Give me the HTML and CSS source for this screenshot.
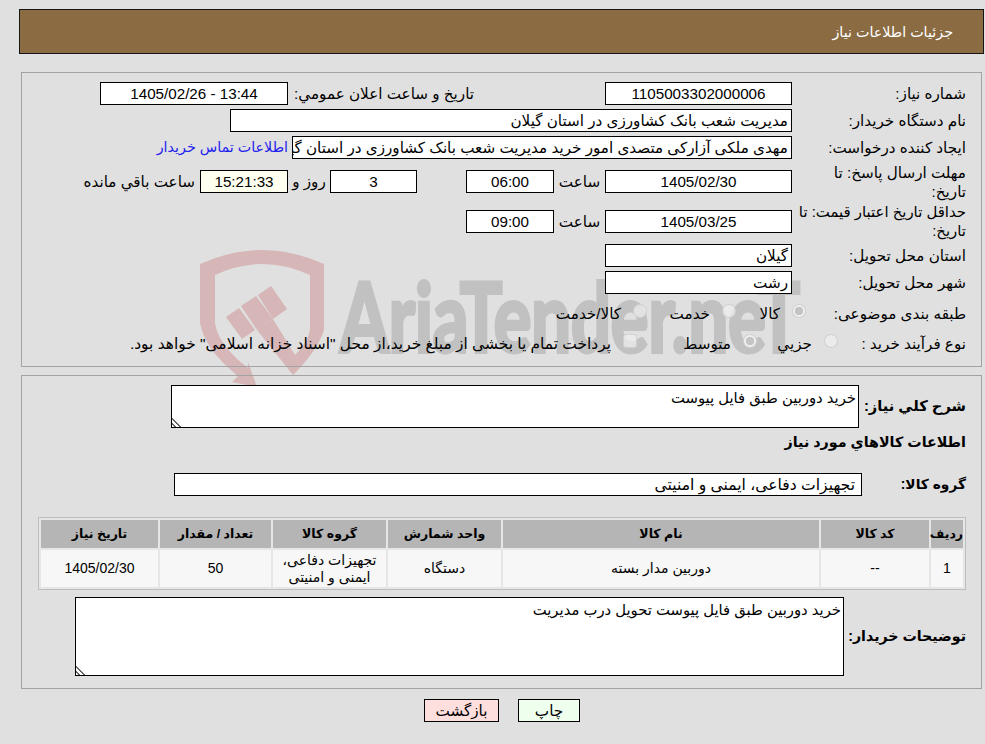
FILE: index.html
```html
<!DOCTYPE html>
<html lang="fa" dir="rtl">
<head>
<meta charset="utf-8">
<title>جزئیات اطلاعات نیاز</title>
<link rel="stylesheet" href="styles.css">
</head>
<body>
<svg class="watermark" viewBox="190 240 640 150" aria-hidden="true">
  <path class="wm-shield" d="M200 264Q262 236 324 264L324 330Q318 350 293 375L257 330L273 319L295 355Q310 340 310 327L310 275Q262 253 215 275L215 323Q218 345 248 368L248 362L257 387L232 382L238 376Q205 350 200 323Z"/>
  <path class="wm-shield" d="M226 317L239 308L255 330L242 339Z"/>
  <path class="wm-shield" d="M241 306L256 296L273 319L257 330Z"/>
  <path class="wm-shield" d="M258 295L271 286L287 309L273 319Z"/>
  <text class="wm-text" dir="ltr" x="340" y="352" textLength="460" lengthAdjust="spacingAndGlyphs">AriaTender.neT</text>
</svg>

<header class="title-bar">جزئیات اطلاعات نیاز</header>

<section class="panel panel-info">
  <div class="row">
    <div class="lbl">شماره نیاز:</div>
    <div class="box w-187 center">1105003302000006</div>
    <div class="lbl lbl-public">تاریخ و ساعت اعلان عمومي:</div>
    <div class="box w-188 center">13:44 - 1405/02/26</div>
  </div>
  <div class="row">
    <div class="lbl">نام دستگاه خریدار:</div>
    <div class="box w-562">مدیریت شعب بانک کشاورزی در استان گیلان</div>
  </div>
  <div class="row">
    <div class="lbl">ایجاد کننده درخواست:</div>
    <div class="box w-500">مهدی ملکی آزارکی متصدی امور خرید مدیریت شعب بانک کشاورزی در استان گیلان</div>
    <a class="link" href="#">اطلاعات تماس خریدار</a>
  </div>
  <div class="row gap-11">
    <div class="lbl">مهلت ارسال پاسخ: تا<br>تاریخ:</div>
    <div class="box w-187 center">1405/02/30</div>
    <div class="unit w-51">ساعت</div>
    <div class="box w-88 center">06:00</div>
    <div class="box w-87 center days">3</div>
    <div class="unit w-42">روز و</div>
    <div class="box w-88 center timer">15:21:33</div>
    <div class="unit left-note">ساعت باقي مانده</div>
  </div>
  <div class="row gap-17">
    <div class="lbl lbl-tight">حداقل تاریخ اعتبار قیمت: تا<br>تاریخ:</div>
    <div class="box w-187 center">1405/03/25</div>
    <div class="unit w-51">ساعت</div>
    <div class="box w-88 center">09:00</div>
  </div>
  <div class="row gap-11">
    <div class="lbl">استان محل تحویل:</div>
    <div class="box w-187">گیلان</div>
  </div>
  <div class="row">
    <div class="lbl">شهر محل تحویل:</div>
    <div class="box w-187">رشت</div>
  </div>
  <div class="row row-opt gap-7">
    <div class="lbl lbl-160">طبقه بندی موضوعی:</div>
    <label class="opt w-70"><input class="mark" type="radio" name="cat" checked disabled><span>کالا</span></label>
    <label class="opt w-89"><input class="mark" type="radio" name="cat" disabled><span>خدمت</span></label>
    <label class="opt"><input class="mark" type="radio" name="cat" disabled><span>کالا/خدمت</span></label>
  </div>
  <div class="row row-opt gap-6">
    <div class="lbl lbl-128">نوع فرآیند خرید :</div>
    <label class="opt w-81"><input class="mark" type="radio" name="proc" disabled><span>جزيي</span></label>
    <label class="opt w-120"><input class="mark" type="radio" name="proc" checked disabled><span>متوسط</span></label>
    <label class="opt"><input class="mark" type="checkbox" disabled><span class="note">پرداخت تمام یا بخشی از مبلغ خرید،از محل "اسناد خزانه اسلامی" خواهد بود.</span></label>
  </div>
</section>

<section class="panel panel-goods">
  <div class="desc-row">
    <div class="lbl-bold lbl-desc">شرح کلي نياز:</div>
    <textarea class="area area-need" readonly>خرید دوربین طبق فایل پیوست</textarea>
  </div>
  <h2 class="goods-title">اطلاعات کالاهاي مورد نياز</h2>
  <div class="group-row">
    <div class="lbl-bold lbl-group">گروه کالا:</div>
    <div class="box w-688 group-box">تجهیزات دفاعی، ایمنی و امنیتی</div>
  </div>
  <table class="goods">
    <colgroup>
      <col class="c-1"><col class="c-2"><col class="c-3"><col class="c-4"><col class="c-5"><col class="c-6"><col class="c-7">
    </colgroup>
    <thead>
      <tr>
        <th>ردیف</th><th>کد کالا</th><th>نام کالا</th><th>واحد شمارش</th><th>گروه کالا</th><th>تعداد / مقدار</th><th>تاریخ نیاز</th>
      </tr>
    </thead>
    <tbody>
      <tr>
        <td>1</td><td>--</td><td>دوربین مدار بسته</td><td>دستگاه</td><td>تجهیزات دفاعی، ایمنی و امنیتی</td><td>50</td><td>1405/02/30</td>
      </tr>
    </tbody>
  </table>
  <div class="desc-row buyer-row">
    <div class="lbl-bold lbl-buyer">توضیحات خریدار:</div>
    <textarea class="area area-buyer" readonly>خرید دوربین طبق فایل پیوست تحویل درب مدیریت</textarea>
  </div>
</section>

<div class="actions">
  <button class="btn btn-print" type="button">چاپ</button>
  <button class="btn btn-back" type="button">بازگشت</button>
</div>
</body>
</html>
```

FILE: styles.css
```css
* { box-sizing: border-box; }
html, body { margin: 0; padding: 0; }
body {
  position: relative;
  z-index: 0;
  height: 744px;
  overflow: hidden;
  background: #e0e0e0;
  color: #000;
  font-family: "Liberation Sans", "DejaVu Sans", sans-serif;
  font-size: 15.2px;
  line-height: 19px;
  padding-top: 9px;
}
.watermark { position: absolute; left: 190px; top: 240px; width: 640px; height: 150px; z-index: -1; }
.wm-shield { fill: #d6b6b6; }
.wm-text {
  fill: #c1c1c1;
  stroke: #c1c1c1;
  stroke-width: 4px;
  font-family: "Lato", sans-serif;
  font-weight: 700;
  font-size: 95px;
  direction: ltr;
}

.title-bar {
  margin: 0 1px 0 19px;
  height: 45px;
  background: #8b6b42;
  border: 1px solid #151515;
  color: #fff;
  padding: 13px 30px 0 0;
  font-size: 14.3px;
}
.panel { border: 1px solid #a3a3a3; margin: 0 3px 0 21px; }
.panel-info { margin-top: 18px; height: 295px; padding: 9px 15px 0 0; }
.panel-goods { margin-top: 8px; height: 314px; padding: 9px 15px 0 0; }

.row { display: flex; align-items: center; height: 23px; margin-top: 4px; }
.row:first-child { margin-top: 0; }
.row.gap-11 { margin-top: 11px; }
.row.gap-17 { margin-top: 17px; }
.row.gap-7 { margin-top: 7px; }
.row.gap-6 { margin-top: 6px; }
.row-opt { height: 24px; }

.lbl { width: 174px; flex: none; }
.lbl-tight { font-size: 14.9px; }
.lbl-160 { width: 160px; }
.lbl-128 { width: 128px; }
.lbl-public { width: 186px; margin-right: 131px; white-space: nowrap; }

.box {
  height: 23px;
  flex: none;
  background: #fff;
  border: 1px solid #000;
  padding: 0 3px 0 0;
  line-height: 21px;
  white-space: nowrap;
  overflow: hidden;
}
.center { text-align: center; padding: 0; }
.timer { background: #fffff0; }
.days { margin-right: 49px; }
.group-box { font-size: 15.6px; padding-right: 6px; }
.w-187 { width: 187px; }
.w-188 { width: 188px; }
.w-562 { width: 562px; }
.w-500 { width: 500px; }
.w-88 { width: 88px; }
.w-87 { width: 87px; }
.w-688 { width: 688px; }

.link { color: #2222ee; font-size: 14.3px; text-decoration: none; margin-right: 4px; white-space: nowrap; }
.unit { flex: none; text-align: center; white-space: nowrap; }
.w-51 { width: 51px; }
.w-42 { width: 42px; }
.left-note { margin-right: 5px; }

.opt { display: flex; align-items: center; flex: none; white-space: nowrap; }
.note { font-size: 15.45px; }
.w-70 { width: 70px; }
.w-89 { width: 89px; }
.w-81 { width: 81px; }
.w-120 { width: 120px; }
.mark {
  appearance: none;
  width: 14px;
  height: 14px;
  margin: 0 0 5px 12px;
  flex: none;
  background: rgba(240, 240, 240, 0.7);
  border: 1px solid rgba(205, 205, 205, 0.9);
  border-radius: 50%;
}
.mark:checked { background: radial-gradient(circle, #c4c4c4 0 4px, #f0f0f0 4.5px); }
.mark[type="checkbox"] { border-radius: 3px; }

.lbl-bold { font-weight: 700; white-space: nowrap; flex: none; }
.desc-row { display: flex; align-items: center; }
.lbl-desc { width: 107px; font-size: 14.7px; }
.area {
  display: block;
  flex: none;
  font: inherit;
  font-size: 14.8px;
  line-height: 19px;
  color: #000;
  background: #fff;
  border: 1px solid #000;
  padding: 3px 2px 2px;
  margin: 0;
  outline: 0;
  overflow: hidden;
}
.area::-webkit-resizer {
  background: linear-gradient(45deg, transparent 2px, #666 2px 3.4px, transparent 3.4px 5px, #666 5px 6.4px, transparent 6.4px);
}
.area-need { width: 688px; height: 43px; }
.goods-title { margin: 5px 0 0; font-size: 14.3px; font-weight: 700; line-height: 19px; height: 19px; }
.group-row { display: flex; align-items: center; margin-top: 21px; }
.lbl-group { width: 104px; font-size: 13.8px; }

.goods {
  table-layout: fixed;
  width: 928px;
  margin: 21px 0 0;
  border-collapse: separate;
  border-spacing: 2px;
  background: #e6e6e6;
  border: 1px solid #bdbdbd;
  text-align: center;
}
.c-1 { width: 32px; }
.c-2 { width: 108px; }
.c-3 { width: 316px; }
.c-4 { width: 113px; }
.c-5 { width: 113px; }
.c-6 { width: 111px; }
.c-7 { width: 117px; }
.goods th { background: #b5b5b5; height: 28px; padding: 0; font-size: 12.5px; font-weight: 700; }
.goods td { background: #f7f7f7; height: 37px; padding: 0; line-height: 17px; font-size: 14px; }
.buyer-row { margin-top: 7px; }
.lbl-buyer { width: 122px; font-size: 14.2px; }
.area-buyer { width: 769px; height: 79px; }

.actions { display: flex; justify-content: center; gap: 19px; margin-top: 10px; padding-left: 19px; }
.btn {
  height: 23px;
  padding: 0;
  border: 1px solid #000;
  font: inherit;
  color: #000;
  line-height: 21px;
}
.btn-print { width: 62px; background: #eeffee; }
.btn-back { width: 75px; background: #ffdede; }
```
